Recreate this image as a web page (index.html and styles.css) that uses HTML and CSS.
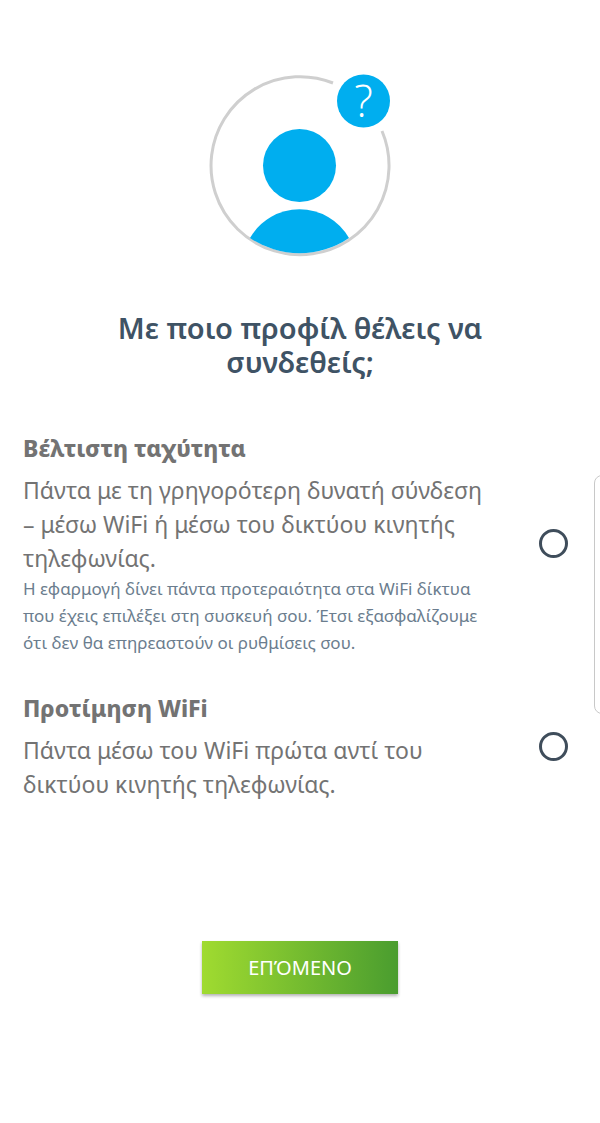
FILE: index.html
```html
<!DOCTYPE html>
<html lang="el">
<head>
  <meta charset="utf-8">
  <meta name="viewport" content="width=device-width, initial-scale=1">
  <title>Επιλογή προφίλ</title>
  <link rel="stylesheet" href="styles.css">
</head>
<body>
  <form class="screen">
    <svg class="avatar" viewBox="0 0 184 184" aria-hidden="true">
      <path class="ring" d="M125 10A89 89 0 1 0 174 58"/>
      <circle class="fill" cx="91.500" cy="92.500" r="36.500"/>
      <path class="fill" d="M42 165A57 57 0 0 1 141 165A88 88 0 0 1 42 165Z"/>
      <circle class="fill" cx="155.500" cy="28" r="26.500"/>
      <text class="mark" x="155.500" y="44">?</text>
    </svg>

    <h1>Με ποιο προφίλ θέλεις να συνδεθείς;</h1>

    <label class="option">
      <span class="copy">
        <strong>Βέλτιστη ταχύτητα</strong>
        <span class="text">Πάντα με τη γρηγορότερη δυνατή σύνδεση – μέσω WiFi ή μέσω του δικτύου κινητής τηλεφωνίας.</span>
        <small>Η εφαρμογή δίνει πάντα προτεραιότητα στα WiFi δίκτυα που έχεις επιλέξει στη συσκευή σου. Έτσι εξασφαλίζουμε ότι δεν θα επηρεαστούν οι ρυθμίσεις σου.</small>
      </span>
      <input type="radio" name="profile" value="speed">
    </label>

    <label class="option">
      <span class="copy">
        <strong>Προτίμηση WiFi</strong>
        <span class="text">Πάντα μέσω του WiFi πρώτα αντί του δικτύου κινητής τηλεφωνίας.</span>
      </span>
      <input type="radio" name="profile" value="wifi">
    </label>

    <button type="button">ΕΠΌΜΕΝΟ</button>
  </form>
  <div class="edge"></div>
</body>
</html>
```
FILE: styles.css
```css
*{box-sizing:border-box}
body{font-family:"Noto Sans","Open Sans",sans-serif;background:#fff;margin:0;color:#737373;overflow-x:hidden}
.screen{display:flex;flex-direction:column;align-items:center;padding:73px 32px 40px 23px}
/* --- profile picture --- */
.avatar{width:184px;height:184px;margin-right:-9px;overflow:visible}
.ring{fill:none;stroke:#cfcfcf;stroke-width:3}
.fill{fill:#00aeef}
.mark{fill:#fff;font-family:"Open Sans",sans-serif;font-weight:300;font-size:44px;text-anchor:middle}
h1{max-width:400px;margin:54px -9px 0 0;font-size:29px;line-height:34px;font-weight:600;text-align:center;color:#3f5365}
/* --- options --- */
.option{display:flex;align-items:center;justify-content:space-between;width:100%;margin-top:35px}
h1 + .option{margin-top:52px}
.copy{flex:0 1 472px}
strong{display:block;font-size:23px;line-height:34px;font-weight:800;margin-bottom:8px}
.text{display:block;font-size:23px;line-height:34px}
small{display:block;font-size:17px;line-height:27px;color:#6b7d8e}
input{appearance:none;flex:none;width:29px;height:29px;margin:0;border:3px solid #3f4d5b;border-radius:50%;background:#fff}
input:checked{background:#3f4d5b;box-shadow:inset 0 0 0 4px #fff}
button{margin:140px -9px 0 0;width:196px;height:53px;border:0;background:linear-gradient(90deg,#a0db30,#4a9d2f);box-shadow:0 2px 3px rgba(0,0,0,.3);color:#fff;font-family:inherit;font-size:20px;cursor:pointer}
/* --- edge panel handle --- */
.edge{position:fixed;top:475px;right:-14px;width:20px;height:239px;border:1px solid #c8c8c8;border-radius:8px}
```
